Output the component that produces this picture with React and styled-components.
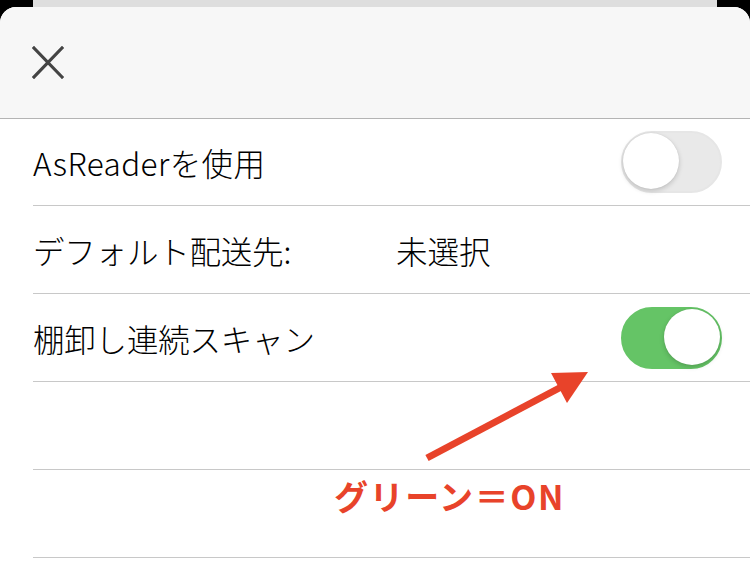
import React from "react";
import styled, { createGlobalStyle } from "styled-components";

const GlobalStyle = createGlobalStyle`
  html, body {
    margin: 0;
    padding: 0;
    background: #000;
  }
  body {
    font-family: "Noto Sans CJK JP", "Noto Sans", sans-serif;
    color: #000;
  }
`;

const Screen = styled.div`
  position: relative;
  width: 750px;
  height: 581px;
  overflow: hidden;
  background: #000;
  display: flex;
  flex-direction: column;
`;

const BackCard = styled.div`
  height: 7px;
  margin: 0 33px;
  background: #dedede;
  flex-shrink: 0;
`;

const Sheet = styled.div`
  flex: 1;
  background: #fff;
  border-radius: 16px 16px 0 0;
  overflow: hidden;
  display: flex;
  flex-direction: column;
`;

const Header = styled.div`
  height: 111px;
  flex-shrink: 0;
  background: #f7f7f7;
  border-bottom: 1px solid #b4b4b4;
  display: flex;
  align-items: center;
  padding-left: 31px;
`;

const CloseButton = styled.button`
  width: 34px;
  height: 34px;
  padding: 0;
  border: none;
  background: none;
  display: flex;
  align-items: center;
  justify-content: center;
`;

const Row = styled.div`
  height: ${({ first }) => (first ? "86px" : "87px")};
  flex-shrink: 0;
  margin-left: 33px;
  padding-right: 28px;
  border-bottom: 1px solid #c8c8c8;
  display: flex;
  align-items: center;
`;

const Label = styled.span`
  font-size: 31.5px;
  font-weight: 300;
  letter-spacing: ${({ latin }) => (latin ? "0.4px" : "-0.2px")};
  width: ${({ width }) => (width ? `${width}px` : "auto")};
  flex: ${({ width }) => (width ? "none" : 1)};
  white-space: nowrap;
`;

const Value = styled.span`
  font-size: 31.5px;
  font-weight: 300;
  flex: 1;
`;

const Track = styled.div`
  position: relative;
  width: 101px;
  height: 62px;
  border-radius: 31px;
  box-sizing: border-box;
  background: ${({ on }) => (on ? "#65c466" : "#e9e9e9")};
  border: 2px solid ${({ on }) => (on ? "#65c466" : "#e6e6e6")};
  flex-shrink: 0;
`;

const Knob = styled.div`
  position: absolute;
  top: 0;
  left: ${({ on }) => (on ? "41px" : "0")};
  width: 56px;
  height: 56px;
  border-radius: 50%;
  background: #fff;
  box-shadow: 0 2px 5px rgba(0, 0, 0, 0.18), 0 0 1px rgba(0, 0, 0, 0.12);
`;

const Annotation = styled.div`
  position: absolute;
  left: 0;
  top: 0;
  width: 750px;
  height: 581px;
  pointer-events: none;
`;

const AnnotationText = styled.div`
  position: absolute;
  left: 334px;
  top: 471px;
  font-family: "Noto Sans CJK JP", sans-serif;
  font-weight: 700;
  font-size: 34px;
  letter-spacing: 1.6px;
  color: #e8432a;
  white-space: nowrap;
`;

const Toggle = ({ on }) => (
  <Track on={on ? 1 : 0}>
    <Knob on={on ? 1 : 0} />
  </Track>
);

export default function App() {
  return (
    <Screen>
      <GlobalStyle />
      <BackCard />
      <Sheet>
        <Header>
          <CloseButton aria-label="close">
            <svg width="32" height="33" viewBox="0 0 32 33">
              <path d="M2 2 L30 31 M30 2 L2 31" stroke="#444" strokeWidth="3.2" strokeLinecap="square" fill="none" />
            </svg>
          </CloseButton>
        </Header>
        <Row first>
          <Label latin>AsReaderを使用</Label>
          <Toggle on={false} />
        </Row>
        <Row>
          <Label width={363}>デフォルト配送先:</Label>
          <Value>未選択</Value>
        </Row>
        <Row>
          <Label>棚卸し連続スキャン</Label>
          <Toggle on />
        </Row>
        <Row />
        <Row />
      </Sheet>
      <Annotation>
        <svg width="750" height="581" viewBox="0 0 750 581">
          <line x1="427" y1="458" x2="565" y2="385" stroke="#e8432a" strokeWidth="7" />
          <polygon points="588,372 551,373 567,403" fill="#e8432a" />
        </svg>
        <AnnotationText>グリーン＝ON</AnnotationText>
      </Annotation>
    </Screen>
  );
}
